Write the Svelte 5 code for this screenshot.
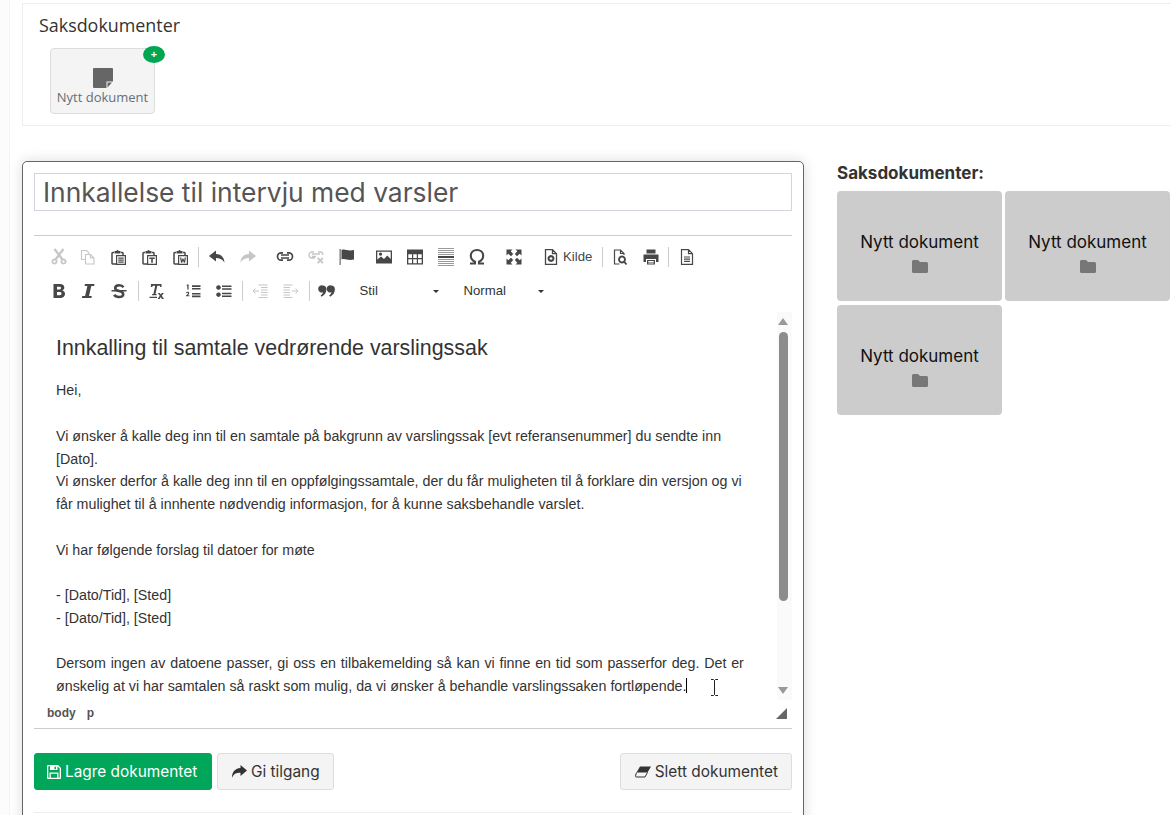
<script>
  // toolbar icons, 16x16 viewBox: f = filled path, s = stroked path
  const klipp = 'M3 3.500H1.700a.7.7 0 0 0-.7.7v10.100a.7.7 0 0 0 .7.7H5M10 3.500h1.300a.7.7 0 0 1 .7.7V6';
  const klemme = 'M3.500 2h2a1 1 0 0 1 2 0h2v2.500h-6z';
  const icons = {
    cut: { s: 'M3.500 0l8 10.500M12.500 0l-8 10.500', w: 2.3, f: 'M3.500 9.500a3 3 0 1 0 .01 0zM12.500 9.500a3 3 0 1 0 .01 0zM3.500 11.300a1.200 1.200 0 1 1-.01 0zM12.500 11.300a1.200 1.200 0 1 1-.01 0z', off: true },
    copy: { s: 'M1.500 1.500h5l2.500 2.500v1M1.500 1.500v9h3.500M5.500 5.500h5l3.500 3.500v6h-8.500zM10.500 5.500V9H14', w: 1.100, off: true },
    paste: { s: klipp, w: 1.500, f: klemme + 'M5 6h10v10H5zM6.200 7.200v7.600h7.600V7.200zM7.300 8.500h5.400v1.200H7.300zM7.300 10.500h5.400v1.200H7.300zM7.300 12.500h5.400v1.200H7.300z' },
    pastet: { s: klipp, w: 1.500, f: klemme + 'M5 6h10v10H5zM6.200 7.200v7.600h7.600V7.200zM7.300 8.500h5.400v1.500h-1.900v3.700H9.200V10H7.300z' },
    pastew: { s: klipp, w: 1.500, f: klemme + 'M5 6h10v10H5zM6.200 7.200v7.600h7.600V7.200zM7 8.500h1.300l.5 3 .7-2h1l.7 2 .5-3H13l-1 5.200h-1.200L10 11.500l-.8 2.200H8z' },
    undo: { f: 'M7 1.500L0 7l7 5.500V9c3.500 0 6 1 8.500 4.500C15 8 12 5 7 5z' },
    redo: { f: 'M9 1.500L16 7l-7 5.500V9c-3.500 0-6 1-8.500 4.500C1 8 4 5 9 5z', off: true },
    link: { s: 'M6 3.800H4.200a3.700 3.700 0 0 0 0 7.400H6M10 3.800h1.800a3.700 3.700 0 0 1 0 7.400H10M4 6h8M4 9h8', w: 1.700 },
    unlink: { s: 'M6 3H4a3 3 0 0 0 0 6h3M10 3h2a3 3 0 0 1 2.900 3M4 5h8M4 7.500h4', w: 1.300, off: true, f: 'M9 9.500l1.300-1.300 2 2 2-2 1.300 1.300-2 2 2 2-1.300 1.300-2-2-2 2L9 13.500l2-2z' },
    flag: { f: 'M.5 0h1.300v16H.5z', f2: 'M2.500 1c3.500-1.500 6 1.500 12.500 0v9.500c-6.500 1.500-9-1.500-12.500 0z' },
    image: { f: 'M0 1.500h16v13H0zM1.300 2.800v7.700l3.700-3 3 2.500 3.300-3.500 3.400 3.500V2.800zM4.500 3.500a1.600 1.600 0 1 1-.01 0z' },
    table: { f: 'M0 .5h16v15H0zM1.300 5.200v3.800h3.700V5.200zM6.200 5.200v3.800h3.600V5.200zM11 5.200v3.800h3.700V5.200zM1.300 10.200v4h3.700v-4zM6.200 10.200v4h3.600v-4zM11 10.200v4h3.700v-4z' },
    hr: { f: 'M0 7h16v2H0z', s2: 'M0 -.5h16M0 1.500h16M0 3.500h16M0 5.500h16M0 10.500h16M0 12.500h16M0 14.500h16M0 16.500h16' },
    omega: { s: 'M1 14.500h5v-1.800C3.300 11.500 1.800 9.300 1.800 6.800 1.800 3.300 4.500 1 8 1s6.200 2.300 6.200 5.800c0 2.500-1.500 4.700-4.200 5.900v1.800h5', w: 2.100 },
    max: { f: 'M.5.5h6L4.700 2.300 7.200 5 5 7.200 2.300 4.700.5 6.500zM15.500.5v6l-1.800-1.800L11 7.200 8.800 5l2.500-2.700L9.500.5zM.5 15.500v-6l1.800 1.800L5 8.800 7.200 11l-2.500 2.700 1.800 1.800zM15.500 15.500h-6l1.800-1.800L8.800 11 11 8.800l2.700 2.500 1.800-1.800z' },
    source: { s: 'M2.500 .7h7l4 4v10.600h-11zM9.500 .7v4h4', w: 1.300, f: 'M8 6a3.500 3.500 0 1 0 .01 0zM8 8l1.700 1.500L8 11 6.300 9.500z' },
    preview: { s: 'M12 6V4.500l-3.500-3.500h-6v14h5M8.500 1v3.500H12', w: 1.200, s3: 'M10 7.500a3 3 0 1 0 .01 0M12 12.500l2.500 3', w3: 1.900 },
    print: { f: 'M3.500 .5h9v4h-9zM.5 5.500h15V13H13v-3H3v3H.5zM4 11h8v4.500H4zM5.300 12v.9h5.400V12zM5.300 13.600v.8h5.400v-.8z' },
    page: { s: 'M2.500 .7h7l4 4v10.600h-11zM9.500 .7v4h4M5 8h6M5 10.200h6M5 12.400h6', w: 1.200 },
    bold: { f: 'M2.500 1h6.500c2.800 0 4.300 1.400 4.300 3.500 0 1.300-.7 2.300-1.900 2.900 1.600.4 2.600 1.700 2.600 3.400 0 2.500-1.800 4.200-4.700 4.200H2.500zM6 3.800v2.700h2.500c1 0 1.500-.5 1.500-1.400S9.500 3.800 8.500 3.800zM6 9.100v3.100h2.800c1.100 0 1.700-.6 1.700-1.600s-.6-1.500-1.700-1.500z' },
    italic: { f: 'M5 1h9.500l-.4 2h-2.800L9 13h2.800l-.4 2H1.900l.4-2h2.800l2.300-10H4.600z' },
    strike: { s: 'M12.500 4.200C11.500 2.800 10 2.200 8.300 2.200c-2.500 0-4.100 1.200-4.100 3 0 3.800 8 2 8 6 0 1.700-1.700 2.800-4.500 2.800-1.900 0-3.600-.8-4.500-2.200', w: 2.600, f: 'M.5 7h15v1.500H.5z' },
    clear: { f: 'M3 1h10.500v3h-1.300l-.4-1.200H9.300L7.500 11h1.200l-.3 1.300H3.900l.3-1.300h1.200L7.200 2.800H5l-.9 1.200H2.800zM1.500 13.800h7.500V15H1.500zM9.800 10h2l1 1.600 1-1.600h2l-2 2.800 2.200 3.200h-2.100l-1.100-1.900-1.100 1.900H9.600l2.200-3.200z' },
    ol: { f: 'M7 2.300h8.500v1.600H7zM7 5h8.500v1.600H7zM7 9.900h8.500v1.600H7zM7 12.600h8.500v1.600H7zM2 1.500h1.600v5H2.300V2.700H1.500zM1 10c.2-.9.900-1.300 1.700-1.300 1 0 1.600.5 1.600 1.300 0 .8-.6 1.400-1.600 2.200h1.700v1.100H1v-.9c1.300-1.100 2.100-1.700 2.100-2.200 0-.5-.8-.5-1 .1z' },
    ul: { f: 'M6 2.500h9.500v1.600H6zM6 5.200h9.500v1.600H6zM6 9.700h9.500v1.600H6zM6 12.400h9.500V14H6zM2.500 2.200a2.300 2.300 0 1 1-.01 0zM2.500 9.400a2.300 2.300 0 1 1-.01 0z' },
    outdent: { s: 'M6.500 2h9M9 4.500h6.500M9 7h6.500M9 9.500h6.500M9 12h6.500M6.500 14.500h9M7 8H1M3.500 5.500L1 8l2.500 2.500', off: true, w: 1 },
    indent: { s: 'M.5 2h9M.5 4.500H7M.5 7H7M.5 9.500H7M.5 12H7M.5 14.500h9M9 8h6M12.500 5.500L15 8l-2.500 2.500', off: true, w: 1 },
    quote: { f: 'M3.800 2.500a3.600 3.600 0 0 1 3.600 3.800c0 3.200-1.700 6-4.800 7.400l-1-1.300c1.400-.9 2.200-2 2.500-3.100A3.600 3.600 0 1 1 3.800 2.500zM12.300 2.500a3.600 3.600 0 0 1 3.600 3.800c0 3.200-1.700 6-4.800 7.400l-1-1.300c1.400-.9 2.200-2 2.500-3.100a3.600 3.600 0 1 1-.3-6.800z' }
  };

  const rad1 = [
    ['cut', 'copy', 'paste', 'pastet', 'pastew'],
    '|',
    ['undo', 'redo'],
    ['link', 'unlink', 'flag'],
    ['image', 'table', 'hr', 'omega'],
    ['max'],
    ['source']
  ];
  const rad1b = [['preview', 'print'], '|', ['page']];
  const rad2 = [
    ['bold', 'italic', 'strike'],
    '|',
    ['clear'],
    ['ol', 'ul'],
    '|',
    ['outdent', 'indent'],
    '|',
    ['quote']
  ];
  const dokumenter = ['Nytt dokument', 'Nytt dokument', 'Nytt dokument'];
</script>

{#snippet ikon(navn)}
  {@const i = icons[navn]}
  <span class="tbtn ikon-{navn}" class:off={i.off}>
    <svg class="tb-svg" width="16" height="16" viewBox="0 0 16 16" aria-hidden="true">
      {#if i.s2}<path d={i.s2} fill="none" stroke="#9a9a9a" stroke-width="1" />{/if}
      {#if i.s}<path d={i.s} fill="none" stroke="#474747" stroke-width={i.w ?? 1.3} />{/if}
      {#if i.s3}<path d={i.s3} fill="none" stroke="#474747" stroke-width={i.w3} />{/if}
      {#if i.f}<path d={i.f} fill={i.f2 ? '#777' : '#474747'} fill-rule="evenodd" />{/if}
      {#if i.f2}<path d={i.f2} fill="#474747" />{/if}
    </svg>
  </span>
{/snippet}

{#snippet grupper(liste)}
  {#each liste as g}
    {#if g === '|'}
      <span class="sep"></span>
    {:else}
      <span class="gruppe">
        {#each g as navn}
          {@render ikon(navn)}
        {/each}
      </span>
    {/if}
  {/each}
{/snippet}

<div class="side">
  <section class="panel">
    <h2 class="panel-tittel">Saksdokumenter</h2>
    <button class="nytt">
      <span class="merke">+</span>
      <svg class="nytt-ikon" width="20" height="20" viewBox="0 0 20 20" aria-hidden="true">
        <path d="M0 1a1 1 0 0 1 1-1h18a1 1 0 0 1 1 1v12.500h-6.500V20H1a1 1 0 0 1-1-1z" fill="#666" />
        <path d="M14.500 14.500h4.500l-4.500 5z" fill="#666" />
      </svg>
      <span>Nytt dokument</span>
    </button>
  </section>

  <div class="innhold">
    <article class="kort">
      <input class="tittel" value="Innkallelse til intervju med varsler" />

      <div class="verktoy">
        <div class="rad">
          {@render grupper(rad1)}
          <span class="kilde">Kilde</span>
          <span class="sep sep-kilde"></span>
          {@render grupper(rad1b)}
        </div>
        <div class="rad rad2">
          {@render grupper(rad2)}
          <span class="velg velg-stil">Stil<i class="pil"></i></span>
          <span class="velg velg-format">Normal<i class="pil"></i></span>
        </div>
      </div>

      <div class="redigering">
        <div class="tekst">
          <h2>Innkalling til samtale vedrørende varslingssak</h2>
          <p>Hei,</p>
          <p>&nbsp;</p>
          <p>Vi ønsker å kalle deg inn til en samtale på bakgrunn av varslingssak [evt referansenummer] du sendte inn [Dato].</p>
          <p>Vi ønsker derfor å kalle deg inn til en oppfølgingssamtale, der du får muligheten til å forklare din versjon og vi får mulighet til å innhente nødvendig informasjon, for å kunne saksbehandle varslet.</p>
          <p>&nbsp;</p>
          <p>Vi har følgende forslag til datoer for møte</p>
          <p>&nbsp;</p>
          <p>- [Dato/Tid], [Sted]</p>
          <p>- [Dato/Tid], [Sted]</p>
          <p>&nbsp;</p>
          <p><span class="vid">Dersom ingen av datoene passer, gi oss en tilbakemelding så kan vi finne en tid som passerfor deg. Det er</span> ønskelig at vi har samtalen så raskt som mulig, da vi ønsker å behandle varslingssaken fortløpende.<span class="caret"></span></p>
        </div>
        <div class="rullefelt">
          <i class="opp"></i>
          <span class="tommel"></span>
          <i class="ned"></i>
        </div>
        <svg class="peker" width="9" height="17" viewBox="0 0 9 17" aria-hidden="true">
          <path d="M1 .5h2.500l1 1 1-1H8M4.500 1.500v14M1 16.500h2.500l1-1 1 1H8" fill="none" stroke="#222" />
        </svg>
      </div>

      <div class="sti">
        <span>body</span><span>p</span>
        <svg class="dra" width="11" height="11" viewBox="0 0 11 11" aria-hidden="true"><path d="M11 0v11H0z" fill="#666" /></svg>
      </div>

      <div class="knapper">
        <button class="knapp gronn">
          <svg width="14" height="14" viewBox="0 0 14 14" aria-hidden="true">
            <path fill-rule="evenodd" fill="#fff" d="M1 0h10l3 3v10a1 1 0 0 1-1 1H1a1 1 0 0 1-1-1V1a1 1 0 0 1 1-1zM1.300 1.300v11.400h1.200V7.500h9v5.200h1.200V3.600l-2.200-2.300V5H3V1.300zM7.500 1.800h1.500v2.500H7.500zM3.800 8.800v3.900h6.400V8.800z" />
          </svg>
          Lagre dokumentet
        </button>
        <button class="knapp">
          <svg width="16" height="14" viewBox="0 0 16 14" aria-hidden="true">
            <path fill="#333" d="M9.500 0L16 5.500 9.500 11V7.800C5 7.800 2.500 9 1 13c-.4-5 2.500-9.500 8.500-10z" />
          </svg>
          Gi tilgang
        </button>
        <button class="knapp slett">
          <svg width="16" height="12" viewBox="0 0 16 12" aria-hidden="true">
            <path fill="#333" d="M5 .5h11l-3.500 6H1.500z" />
            <path fill="none" stroke="#333" d="M1.500 6.500l-1 3.500q0 1 1 1h8.500l2.500-4.500" />
          </svg>
          Slett dokumentet
        </button>
      </div>
      <hr class="bunn" />
    </article>

    <aside class="liste">
      <h3>Saksdokumenter:</h3>
      <div class="ruter">
        {#each dokumenter as d}
          <div class="rute">
            <span>{d}</span>
            <svg width="16" height="13" viewBox="0 0 16 13" aria-hidden="true">
              <path fill="#777" d="M1.500 0h4.500l2 2h6.500A1.500 1.500 0 0 1 16 3.500v8a1.500 1.500 0 0 1-1.500 1.500h-13A1.500 1.500 0 0 1 0 11.500v-10A1.500 1.500 0 0 1 1.500 0z" />
            </svg>
          </div>
        {/each}
      </div>
    </aside>
  </div>
</div>

<style>
  :global(body) {
    margin: 0;
    background: #fcfcfc;
    overflow: hidden;
  }

  .side {
    margin-left: 9px;
    height: 815px;
    overflow: hidden;
    box-sizing: border-box;
    padding: 3px 0 0 12px;
    background: #fff;
    border-left: 1px solid #f4f4f4;
    font-family: Inter, sans-serif;
    color: #333;
  }

  .panel {
    height: 123px;
    box-sizing: border-box;
    border: 1px solid #eee;
    border-right: 0;
    padding: 9px 16px 0;
  }

  .panel-tittel {
    margin: 0;
    font: 400 17.900px/24px "Open Sans", sans-serif;
    color: #333;
  }

  .nytt {
    position: relative;
    display: flex;
    flex-direction: column;
    align-items: center;
    width: 105px;
    height: 66px;
    margin: 11px 0 0 11px;
    padding: 19px 0 0;
    box-sizing: border-box;
    background: #f4f4f4;
    border: 1px solid #ddd;
    border-radius: 4px;
    font: 400 13px/18px "Open Sans", sans-serif;
    color: #666e7a;
  }

  .merke {
    position: absolute;
    top: -3px;
    right: -11px;
    width: 22px;
    height: 17px;
    border-radius: 50%;
    background: #00a651;
    color: #fff;
    font: 700 11px/16px "Open Sans", sans-serif;
  }

  .innhold {
    display: flex;
    align-items: flex-start;
    margin-top: 35px;
  }

  .kort {
    flex: none;
    width: 782px;
    height: 700px;
    box-sizing: border-box;
    padding: 11px 11px 0;
    border: 1px solid #666;
    border-radius: 5px;
    box-shadow: 0 0 14px rgba(0, 0, 0, 0.14);
    background: #fff;
  }

  .tittel {
    display: block;
    width: 100%;
    height: 38px;
    box-sizing: border-box;
    padding: 0 8px;
    border: 1px solid #d4d4dc;
    font: 400 26.400px/36px Inter, sans-serif;
    color: #555;
    outline: none;
  }

  .verktoy {
    margin-top: 24px;
    border-top: 1px solid #ccc;
    padding: 4px 0 0 9px;
  }

  .rad {
    display: flex;
    align-items: center;
    height: 34px;
  }

  .gruppe {
    display: flex;
    margin-right: 6px;
  }

  .gruppe:has(+ .sep) {
    margin-right: 0;
  }

  .tbtn {
    display: flex;
    justify-content: center;
    align-items: center;
    width: 31px;
    height: 26px;
  }

  .tb-svg {
    overflow: visible;
  }

  .ikon-copy,
  .ikon-italic {
    margin-left: -2px;
  }

  .ikon-strike {
    margin-right: 1.500px;
  }

  .off {
    opacity: 0.3;
  }

  .sep {
    width: 1px;
    height: 20px;
    background: #ccc;
    margin-right: 2px;
    margin-left: 2px;
  }

  .kilde {
    margin-left: -9px;
    font: 400 13.200px/16px "Liberation Sans", sans-serif;
    color: #474747;
  }

  .sep-kilde {
    margin-left: 10px;
    margin-right: 1px;
  }

  .velg {
    position: relative;
    font: 400 13.200px/16px "Liberation Sans", sans-serif;
    color: #333;
  }

  .velg-stil {
    width: 104px;
    margin-left: 11px;
  }

  .velg-format {
    width: 90px;
  }

  .pil {
    position: absolute;
    right: 10px;
    top: 7px;
    border: 3px solid transparent;
    border-top: 3px solid #333;
    border-bottom: 0;
  }

  .velg-stil .pil {
    right: 25px;
  }

  .redigering {
    position: relative;
    display: flex;
    height: 388px;
    margin-top: 4px;
    overflow: hidden;
  }

  .tekst {
    flex: 1;
    padding: 24px 30px 0 22px;
    font: 400 14.250px/22.750px "Liberation Sans", sans-serif;
    color: #333;
  }

  .tekst h2 {
    margin: 0 0 19.400px;
    font: 400 21.400px/24px "Liberation Sans", sans-serif;
    color: #333;
  }

  .tekst p {
    margin: 0;
  }

  .vid {
    word-spacing: 0.85px;
  }

  .caret {
    display: inline-block;
    width: 1px;
    height: 15px;
    background: #000;
    vertical-align: -2px;
  }

  .rullefelt {
    flex: none;
    position: relative;
    width: 15px;
    background: #fafafa;
  }

  .tommel {
    position: absolute;
    left: 2px;
    top: 20px;
    width: 9px;
    height: 269px;
    border-radius: 5px;
    background: #8c8c8c;
  }

  .opp,
  .ned {
    position: absolute;
    left: 1px;
    border: 5.500px solid transparent;
  }

  .opp {
    top: 6px;
    border-bottom: 7px solid #999;
    border-top: 0;
  }

  .ned {
    top: 375px;
    border-top: 7px solid #999;
    border-bottom: 0;
  }

  .peker {
    position: absolute;
    left: 676px;
    top: 367px;
  }

  .sti {
    position: relative;
    display: flex;
    gap: 11px;
    height: 29px;
    padding-left: 13px;
    box-sizing: border-box;
    border-bottom: 1px solid #ccc;
    font: 700 12px/27px "Liberation Sans", sans-serif;
    color: #555;
  }

  .dra {
    position: absolute;
    right: 5px;
    top: 8px;
  }

  .knapper {
    display: flex;
    gap: 5px;
    margin-top: 24px;
  }

  .knapp {
    display: flex;
    align-items: center;
    gap: 4px;
    height: 37px;
    padding: 0 13px;
    box-sizing: border-box;
    background: #f4f4f4;
    border: 1px solid #ddd;
    border-radius: 3px;
    font: 400 15.400px/20px Inter, sans-serif;
    color: #333;
  }

  .gronn {
    width: 178px;
    padding: 0 12px;
    background: #00a65a;
    border-color: #00a65a;
    color: #fff;
  }

  .slett {
    margin-left: auto;
    padding-left: 14px;
  }

  .bunn {
    margin: 22px 0 0;
    border: 0;
    border-top: 1px solid #eee;
  }

  .liste {
    flex: none;
    margin: 1px 0 0 33px;
    width: 334px;
  }

  .liste h3 {
    margin: 0;
    font: 700 17px/22px Inter, sans-serif;
    color: #333;
  }

  .ruter {
    display: grid;
    grid-template-columns: repeat(2, 165px);
    column-gap: 3px;
    row-gap: 4px;
    margin-top: 7px;
  }

  .rute {
    display: flex;
    flex-direction: column;
    align-items: center;
    gap: 8px;
    height: 110px;
    padding-top: 41px;
    box-sizing: border-box;
    background: #ccc;
    border-radius: 4px;
    font: 400 17px/20px Inter, sans-serif;
    color: #111;
  }
</style>
